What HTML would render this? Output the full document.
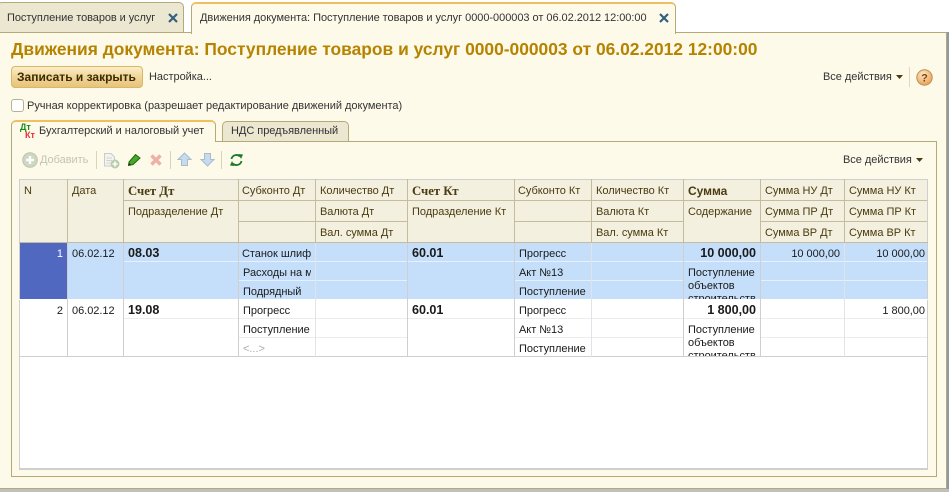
<!DOCTYPE html>
<html lang="ru"><head><meta charset="utf-8"><title>Движения документа</title>
<style>
html,body{margin:0;padding:0;width:949px;height:492px;overflow:hidden;background:#fff}
body{position:relative;font:11px/15px "Liberation Sans","DejaVu Sans",sans-serif;letter-spacing:-.03px;color:#1a1a1a}
div,span,svg{position:absolute;box-sizing:border-box}
.t{white-space:nowrap}
.h{color:#4a3c10;white-space:nowrap;height:15px}
.b{font-weight:bold}
.d{white-space:nowrap;overflow:hidden;height:15px}
.r{text-align:right}
.v{width:1px;top:179px;height:178px;background:#cfcfcf}
.hv{width:1px;top:179px;height:64px;background:#c4bc9c}
.hl{height:1px;background:#c4bc9c}
.sel{height:1px;background:#e6f1fd}
.wl{height:1px;background:#ececec}
.m{font-size:12.6px;height:15px}
.s{font-family:'Liberation Serif',serif;font-size:12.8px}
</style></head><body>
<!-- window -->
<div style="left:0;top:32px;width:947px;height:457px;background:#fdfaea;border-top:1px solid #b3aa78;border-right:1px solid #b3aa78;border-bottom:1px solid #b3aa78"></div>
<div style="left:947px;top:32px;width:2px;height:460px;background:#8f98a8"></div>
<div style="left:0;top:489px;width:949px;height:3px;background:#c0c0c0"></div>
<!-- tabs -->
<div style="left:-3px;top:2px;width:187px;height:31px;background:#ece7d1;border:1px solid #b3aa78;border-radius:5px 5px 0 0"></div>
<div class="t" style="left:7px;top:11px;color:#333;letter-spacing:-.07px">Поступление товаров и услуг</div>
<svg style="left:167px;top:12px" width="12" height="12" viewBox="0 0 12 12"><path d="M2 2L10 10M10 2L2 10" stroke="#34607e" stroke-width="2.2"/></svg>
<div style="left:191px;top:2px;width:485px;height:32px;background:#fdfaea;border:1px solid #b3aa78;border-top:2px solid #f0c060;border-bottom:0;border-radius:5px 5px 0 0"></div>
<div class="t" style="left:200px;top:11px;color:#333;letter-spacing:-.04px">Движения документа: Поступление товаров и услуг 0000-000003 от 06.02.2012 12:00:00</div>
<svg style="left:658px;top:12px" width="12" height="12" viewBox="0 0 12 12"><path d="M2 2L10 10M10 2L2 10" stroke="#34607e" stroke-width="2.2"/></svg>
<!-- title -->
<div class="t b" style="left:11px;top:39px;font-size:17.4px;line-height:20px;letter-spacing:0;color:#b58300">Движения документа: Поступление товаров и услуг 0000-000003 от 06.02.2012 12:00:00</div>
<!-- command bar -->
<div style="left:11px;top:66px;width:132px;height:22px;border:1px solid #d8b768;border-radius:4px;background:linear-gradient(#fbeec8,#f0d498 50%,#e8c47a)"></div>
<div class="t b" style="left:17px;top:70px;color:#3a2c00;font-size:12px;letter-spacing:0">Записать и закрыть</div>
<div class="t" style="left:149px;top:70px;color:#333">Настройка...</div>
<div class="t" style="left:823px;top:70px;color:#333">Все действия</div>
<svg style="left:896px;top:75px" width="7" height="4"><path d="M0 0H7L3.5 4Z" fill="#4a3c10"/></svg>
<div style="left:909px;top:67px;width:1px;height:20px;background:#e0d8b8"></div>
<svg style="left:916px;top:69px" width="17" height="17" viewBox="0 0 17 17"><defs><radialGradient id="g" cx=".4" cy=".3" r=".8"><stop offset="0" stop-color="#fde8c8"/><stop offset="1" stop-color="#e89a48"/></radialGradient></defs><circle cx="8.5" cy="8.5" r="7.7" fill="url(#g)" stroke="#b8904c"/><text x="8.5" y="12.5" text-anchor="middle" font-family="Liberation Sans" font-weight="bold" font-size="11" fill="#7a4a10">?</text></svg>
<!-- checkbox -->
<div style="left:11px;top:99px;width:13px;height:13px;background:#fff;border:1px solid #b8b090;border-radius:3px"></div>
<div class="t" style="left:27px;top:99px;color:#333;letter-spacing:-.015px">Ручная корректировка (разрешает редактирование движений документа)</div>
<!-- panel -->
<div style="left:11px;top:141px;width:926px;height:336px;border:1px solid #b3aa78"></div>
<div style="left:222px;top:121px;width:127px;height:21px;background:#ece7d1;border:1px solid #b3aa78;border-radius:5px 5px 0 0"></div>
<div class="t" style="left:231px;top:124px;color:#333">НДС предъявленный</div>
<div style="left:11px;top:120px;width:205px;height:22px;background:#fdfaea;border:1px solid #b3aa78;border-top:2px solid #f0c060;border-bottom:0;border-radius:5px 5px 0 0"></div>
<div class="t b" style="left:20px;top:122px;font-size:9px;line-height:10px;color:#1a8a1a">Дт</div>
<div class="t b" style="left:25px;top:130px;font-size:9px;line-height:10px;color:#e83030">Кт</div>
<div class="t" style="left:39px;top:124px;color:#333">Бухгалтерский и налоговый учет</div>
<!-- toolbar -->
<svg style="left:22px;top:152px" width="16" height="16" viewBox="0 0 16 16"><circle cx="8" cy="8" r="7.3" fill="#cdd8c0" stroke="#c0c4b0"/><path d="M8 4V12M4 8H12" stroke="#fff" stroke-width="2.4"/></svg>
<div class="t" style="left:40px;top:153px;color:#c4c4b4">Добавить</div>
<div style="left:96px;top:151px;width:1px;height:18px;background:#d8d4b8"></div>
<svg style="left:103px;top:152px" width="17" height="17" viewBox="0 0 17 17"><path d="M1.5 1.5H8L11.5 5V14H1.5Z" fill="#f4f4ee" stroke="#c8ccd0"/><path d="M3.5 6H9M3.5 8.5H9M3.5 11H7" stroke="#d0d0d0"/><circle cx="12" cy="12" r="4.5" fill="#b8ccb0"/><path d="M12 9.5V14.5M9.5 12H14.5" stroke="#fff" stroke-width="1.6"/></svg>
<svg style="left:127px;top:153px" width="14" height="14" viewBox="0 0 14 14"><path d="M1.500 12.500L2 9L8.500 1.500L13 5L6 11.500Z" fill="#4aa828" stroke="#1c6a10"/><path d="M1.500 12.500L2 10L4 11.500Z" fill="#222"/></svg>
<svg style="left:149px;top:153px" width="14" height="14" viewBox="0 0 14 14"><path d="M2.5 2.5L11.5 11.5M11.5 2.5L2.5 11.5" stroke="#f0b0a8" stroke-width="3.4"/></svg>
<div style="left:170px;top:151px;width:1px;height:18px;background:#d8d4b8"></div>
<svg style="left:177px;top:152px" width="15" height="15" viewBox="0 0 15 15"><path d="M7.5 1L14 7.5H10.5V13.5H4.5V7.5H1Z" fill="#c4dcee" stroke="#a8bccc"/></svg>
<svg style="left:200px;top:152px" width="15" height="15" viewBox="0 0 15 15"><path d="M7.5 14L14 7.5H10.5V1.5H4.5V7.5H1Z" fill="#c4dcee" stroke="#a8bccc"/></svg>
<div style="left:221px;top:151px;width:1px;height:18px;background:#d8d4b8"></div>
<svg style="left:229px;top:153px" width="15" height="14" viewBox="0 0 15 14"><path d="M2.5 6A5 5 0 0 1 11 3.5" fill="none" stroke="#1c7a28" stroke-width="1.8"/><path d="M9.5 1L14 1.5L12 6Z" fill="#1c7a28"/><path d="M12.5 8A5 5 0 0 1 4 10.5" fill="none" stroke="#1c7a28" stroke-width="1.8"/><path d="M5.5 13L1 12.5L3 8Z" fill="#1c7a28"/></svg>
<div class="t" style="left:843px;top:153px;color:#333">Все действия</div>
<svg style="left:916px;top:158px" width="7" height="4"><path d="M0 0H7L3.5 4Z" fill="#4a3c10"/></svg>
<!-- table -->
<div style="left:19px;top:179px;width:909px;height:291px;background:#fff;border:1px solid #cfcfcf;border-bottom:2px solid #cfcfcf"></div>
<div style="left:20px;top:180px;width:907px;height:62px;background:#f4f0df"></div>
<div style="left:20px;top:243px;width:907px;height:56px;background:#c5dffb"></div>
<div style="left:20px;top:243px;width:47px;height:56px;background:#5068c0"></div>
<div class="hl" style="left:19px;top:242px;width:909px"></div>
<div style="left:19px;top:299px;width:909px;height:1px;background:#fff"></div>
<div style="left:20px;top:356px;width:907px;height:1px;background:#cfcfcf"></div>
<!-- data sublines row 1 -->
<div class="sel" style="left:123px;top:261px;width:804px"></div>
<div class="sel" style="left:238px;top:280px;width:169px"></div>
<div class="sel" style="left:514px;top:280px;width:169px"></div>
<div class="sel" style="left:760px;top:280px;width:167px"></div>
<!-- data sublines row 2 -->
<div class="wl" style="left:123px;top:318px;width:804px"></div>
<div class="wl" style="left:238px;top:337px;width:169px"></div>
<div class="wl" style="left:514px;top:337px;width:169px"></div>
<div class="wl" style="left:760px;top:337px;width:167px"></div>
<!-- data verticals -->
<div class="v" style="left:67px;top:243px;height:114px"></div><div class="v" style="left:123px;top:243px;height:114px"></div><div class="v" style="left:238px;top:243px;height:114px"></div><div class="v" style="left:315px;top:243px;height:114px;background:#e0e4ea"></div><div class="v" style="left:407px;top:243px;height:114px"></div><div class="v" style="left:514px;top:243px;height:114px"></div><div class="v" style="left:591px;top:243px;height:114px;background:#e0e4ea"></div><div class="v" style="left:683px;top:243px;height:114px"></div><div class="v" style="left:760px;top:243px;height:114px"></div><div class="v" style="left:844px;top:243px;height:114px;background:#e0e4ea"></div>
<!-- header lines -->
<div class="hl" style="left:123px;top:200px;width:804px"></div>
<div class="hl" style="left:238px;top:221px;width:169px"></div>
<div class="hl" style="left:514px;top:221px;width:169px"></div>
<div class="hl" style="left:760px;top:221px;width:167px"></div>
<div class="hv" style="left:67px"></div><div class="hv" style="left:123px"></div><div class="hv" style="left:238px"></div><div class="hv" style="left:315px"></div><div class="hv" style="left:407px"></div><div class="hv" style="left:514px"></div><div class="hv" style="left:591px"></div><div class="hv" style="left:683px"></div><div class="hv" style="left:760px"></div><div class="hv" style="left:844px"></div>
<!-- header text -->
<div class="h" style="left:24px;top:184px">N</div>
<div class="h" style="left:72px;top:184px">Дата</div>
<div class="h b s" style="left:128px;top:184px">Счет Дт</div>
<div class="h" style="left:128px;top:205px">Подразделение Дт</div>
<div class="h" style="left:242px;top:184px">Субконто Дт</div>
<div class="h" style="left:320px;top:184px">Количество Дт</div>
<div class="h" style="left:320px;top:205px">Валюта Дт</div>
<div class="h" style="left:320px;top:226px">Вал. сумма Дт</div>
<div class="h b s" style="left:412px;top:184px">Счет Кт</div>
<div class="h" style="left:412px;top:205px">Подразделение Кт</div>
<div class="h" style="left:518px;top:184px">Субконто Кт</div>
<div class="h" style="left:596px;top:184px">Количество Кт</div>
<div class="h" style="left:596px;top:205px">Валюта Кт</div>
<div class="h" style="left:596px;top:226px">Вал. сумма Кт</div>
<div class="h b" style="left:688px;top:184px;font-size:12px">Сумма</div>
<div class="h" style="left:688px;top:205px">Содержание</div>
<div class="h" style="left:765px;top:184px">Сумма НУ Дт</div>
<div class="h" style="left:765px;top:205px">Сумма ПР Дт</div>
<div class="h" style="left:765px;top:226px">Сумма ВР Дт</div>
<div class="h" style="left:849px;top:184px">Сумма НУ Кт</div>
<div class="h" style="left:849px;top:205px">Сумма ПР Кт</div>
<div class="h" style="left:849px;top:226px">Сумма ВР Кт</div>
<!-- row 1 -->
<div class="d r" style="left:20px;top:247px;width:43px;color:#fff">1</div>
<div class="d" style="left:72px;top:247px">06.02.12</div>
<div class="d b m" style="left:128px;top:246px">08.03</div>
<div class="d" style="left:242px;top:247px;width:69px">Станок шлифовальный</div>
<div class="d" style="left:243px;top:266px;width:68px">Расходы на материалы</div>
<div class="d" style="left:243px;top:285px;width:68px">Подрядный</div>
<div class="d b m" style="left:412px;top:246px">60.01</div>
<div class="d" style="left:519px;top:247px;width:68px">Прогресс</div>
<div class="d" style="left:519px;top:266px;width:68px">Акт №13</div>
<div class="d" style="left:519px;top:285px;width:68px">Поступление</div>
<div class="d b r m" style="left:684px;top:246px;width:72px">10 000,00</div>
<div class="d r" style="left:761px;top:247px;width:79px">10 000,00</div>
<div class="d r" style="left:845px;top:247px;width:80px">10 000,00</div>
<div style="left:688px;top:267px;width:70px;height:32px;overflow:hidden;white-space:nowrap;line-height:13px">Поступление<br>объектов<br>строительств</div>
<!-- row 2 -->
<div class="d r" style="left:20px;top:304px;width:43px">2</div>
<div class="d" style="left:72px;top:304px">06.02.12</div>
<div class="d b m" style="left:128px;top:303px">19.08</div>
<div class="d" style="left:243px;top:304px;width:68px">Прогресс</div>
<div class="d" style="left:243px;top:323px;width:68px">Поступление</div>
<div class="d" style="left:243px;top:342px;width:68px;color:#aaa">&lt;...&gt;</div>
<div class="d b m" style="left:412px;top:303px">60.01</div>
<div class="d" style="left:519px;top:304px;width:68px">Прогресс</div>
<div class="d" style="left:519px;top:323px;width:68px">Акт №13</div>
<div class="d" style="left:519px;top:342px;width:68px">Поступление</div>
<div class="d b r m" style="left:684px;top:303px;width:72px">1 800,00</div>
<div class="d r" style="left:845px;top:304px;width:80px">1 800,00</div>
<div style="left:688px;top:324px;width:70px;height:32px;overflow:hidden;white-space:nowrap;line-height:13px">Поступление<br>объектов<br>строительств</div>
</body></html>
